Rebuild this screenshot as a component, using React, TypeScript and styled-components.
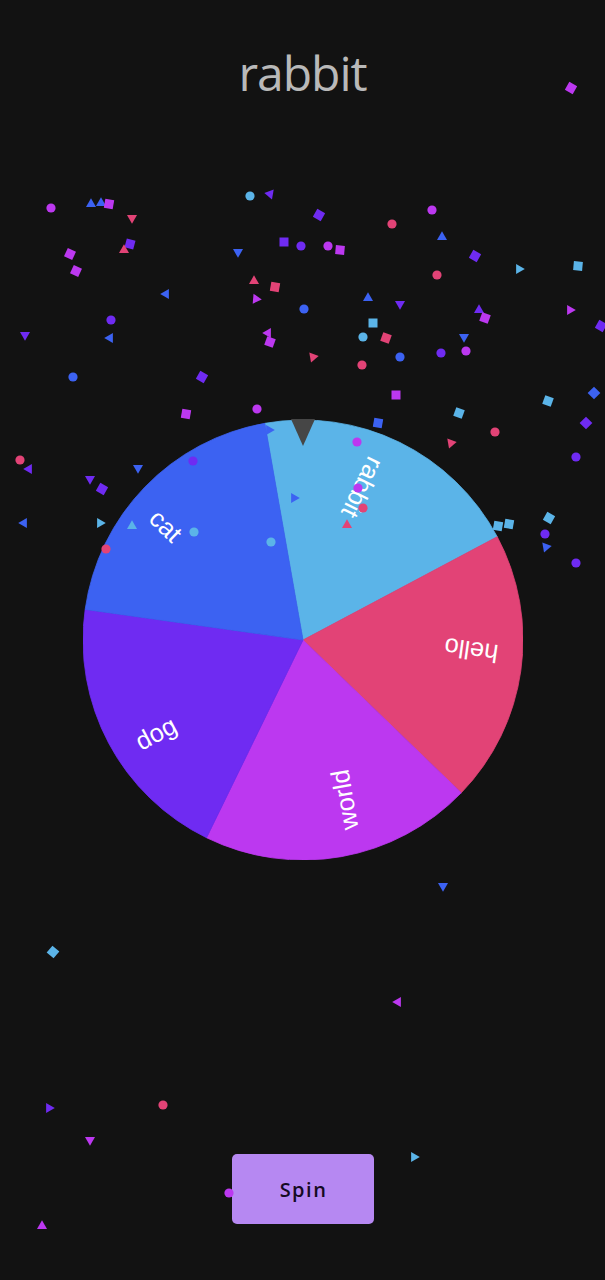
import React from "react";
import styled, { createGlobalStyle } from "styled-components";

const GlobalStyle = createGlobalStyle`
  html, body {
    margin: 0;
    padding: 0;
    background: #121212;
  }
  #root {
    min-height: 1280px;
  }
`;

const Page = styled.main`
  position: relative;
  width: 605px;
  min-height: 1280px;
  display: flex;
  flex-direction: column;
  align-items: center;
  padding-top: 49px;
  box-sizing: border-box;
  background: #121212;
  overflow: hidden;
`;

const Title = styled.h1`
  margin: 0;
  font-family: "Open Sans", "Noto Sans", sans-serif;
  font-weight: 400;
  font-size: 48px;
  line-height: 48px;
  letter-spacing: -1px;
  color: #b9b9b9;
`;

const WheelArea = styled.div`
  position: relative;
  width: 440px;
  height: 440px;
  margin-top: 323px;
`;

const WheelSvg = styled.svg`
  display: block;
  width: 440px;
  height: 440px;
`;

const Pointer = styled.div`
  position: absolute;
  top: -1px;
  left: 50%;
  transform: translateX(-50%);
  width: 0;
  height: 0;
  border-left: 12.5px solid transparent;
  border-right: 12.5px solid transparent;
  border-top: 27px solid #464646;
`;

const SpinButton = styled.button`
  margin-top: 294px;
  width: 142px;
  height: 70px;
  display: flex;
  align-items: center;
  justify-content: center;
  border: none;
  border-radius: 5px;
  background: #b688f2;
  color: #150a22;
  font-family: "Open Sans", "Noto Sans", sans-serif;
  font-size: 20px;
  font-weight: 600;
  letter-spacing: 1.5px;
  padding: 0 0 0 2px;
  cursor: pointer;
`;

const ConfettiLayer = styled.svg`
  position: absolute;
  top: 0;
  left: 0;
  width: 605px;
  height: 1280px;
  pointer-events: none;
`;

const COLORS: Record<string, string> = {
  L: "#5bb4e8",
  P: "#e24376",
  M: "#bc38f0",
  V: "#6f2bf2",
  B: "#3c62f2",
};

type Segment = { label: string; color: string };

const SEGMENTS: Segment[] = [
  { label: "rabbit", color: COLORS.L },
  { label: "hello", color: COLORS.P },
  { label: "world", color: COLORS.M },
  { label: "dog", color: COLORS.V },
  { label: "cat", color: COLORS.B },
];

const R = 220;
const OFFSET = -10;

const pt = (a: number, r: number) => {
  const rad = (a * Math.PI) / 180;
  return [r * Math.sin(rad), -r * Math.cos(rad)];
};

type Piece = [number, number, "c" | "s" | "t", string, number];

const PIECES: Piece[] = [
  [51, 208, "c", "M", 0],
  [91, 204, "t", "B", 0],
  [101, 203, "t", "B", 0],
  [109, 204, "s", "M", 10],
  [132, 218, "t", "P", 180],
  [250, 196, "c", "L", 0],
  [270, 194, "t", "V", 160],
  [319, 215, "s", "V", 30],
  [392, 224, "c", "P", 0],
  [432, 210, "c", "M", 0],
  [442, 237, "t", "B", 0],
  [475, 256, "s", "V", 30],
  [519, 269, "t", "L", 90],
  [578, 266, "s", "L", 5],
  [130, 244, "s", "V", 15],
  [124, 250, "t", "P", 0],
  [70, 254, "s", "M", 25],
  [76, 271, "s", "M", 25],
  [238, 252, "t", "B", 180],
  [284, 242, "s", "V", 0],
  [301, 246, "c", "V", 0],
  [328, 246, "c", "M", 0],
  [340, 250, "s", "M", 5],
  [254, 281, "t", "P", 0],
  [275, 287, "s", "P", 10],
  [256, 299, "t", "M", 95],
  [166, 294, "t", "B", 270],
  [437, 275, "c", "P", 0],
  [368, 298, "t", "B", 240],
  [400, 304, "t", "V", 180],
  [304, 309, "c", "B", 0],
  [111, 320, "c", "V", 0],
  [25, 335, "t", "V", 180],
  [110, 338, "t", "B", 270],
  [268, 333, "t", "M", 150],
  [270, 342, "s", "M", 20],
  [373, 323, "s", "L", 0],
  [363, 337, "c", "L", 0],
  [386, 338, "s", "P", 20],
  [464, 337, "t", "B", 300],
  [479, 310, "t", "V", 240],
  [485, 318, "s", "M", 20],
  [570, 310, "t", "M", 90],
  [601, 326, "s", "V", 30],
  [400, 357, "c", "B", 0],
  [441, 353, "c", "V", 0],
  [466, 351, "c", "M", 0],
  [313, 357, "t", "P", 80],
  [362, 365, "c", "P", 0],
  [73, 377, "c", "B", 0],
  [202, 377, "s", "V", 30],
  [396, 395, "s", "M", 0],
  [548, 401, "s", "L", 20],
  [594, 393, "s", "B", 45],
  [186, 414, "s", "M", 10],
  [257, 409, "c", "M", 0],
  [459, 413, "s", "L", 20],
  [586, 423, "s", "V", 45],
  [378, 423, "s", "B", 10],
  [495, 432, "c", "P", 0],
  [451, 443, "t", "P", 80],
  [357, 442, "c", "M", 0],
  [269, 430, "t", "B", 90],
  [193, 461, "c", "V", 0],
  [138, 468, "t", "B", 180],
  [29, 469, "t", "V", 150],
  [20, 460, "c", "P", 0],
  [90, 479, "t", "V", 300],
  [102, 489, "s", "V", 30],
  [100, 523, "t", "L", 210],
  [24, 523, "t", "B", 150],
  [132, 526, "t", "L", 0],
  [106, 549, "c", "P", 0],
  [194, 532, "c", "L", 0],
  [271, 542, "c", "L", 0],
  [294, 498, "t", "B", 90],
  [358, 488, "c", "M", 0],
  [363, 508, "c", "P", 0],
  [347, 525, "t", "P", 0],
  [498, 526, "s", "L", 10],
  [509, 524, "s", "L", 10],
  [549, 518, "s", "L", 30],
  [545, 534, "c", "V", 0],
  [546, 547, "t", "B", 200],
  [576, 457, "c", "V", 0],
  [576, 563, "c", "V", 0],
  [443, 886, "t", "B", 300],
  [53, 952, "s", "L", 40],
  [398, 1002, "t", "M", 270],
  [49, 1108, "t", "V", 90],
  [163, 1105, "c", "P", 0],
  [90, 1140, "t", "M", 180],
  [229, 1193, "c", "M", 0],
  [42, 1226, "t", "M", 0],
  [414, 1157, "t", "L", 90],
  [571, 88, "s", "M", 30],
];

const ConfettiPiece: React.FC<{ piece: Piece }> = ({ piece }) => {
  const [x, y, shape, c, rot] = piece;
  const fill = COLORS[c];
  const transform = `translate(${x} ${y}) rotate(${rot})`;
  if (shape === "c") return <circle cx={x} cy={y} r={4.6} fill={fill} />;
  if (shape === "s")
    return <rect x={-4.5} y={-4.5} width={9} height={9} fill={fill} transform={transform} />;
  return <polygon points="0,-5.8 5,2.9 -5,2.9" fill={fill} transform={transform} />;
};

const Wheel: React.FC = () => (
  <WheelSvg viewBox={`${-R} ${-R} ${2 * R} ${2 * R}`}>
    {SEGMENTS.map((seg, i) => {
      const s = OFFSET + 72 * i;
      const e = s + 72;
      const [x1, y1] = pt(s, R);
      const [x2, y2] = pt(e, R);
      return (
        <path
          key={seg.label}
          d={`M0 0 L${x1} ${y1} A${R} ${R} 0 0 1 ${x2} ${y2} Z`}
          fill={seg.color}
          stroke={seg.color}
          strokeWidth={0.8}
          strokeLinejoin="round"
        />
      );
    })}
    {SEGMENTS.map((seg, i) => {
      const mid = OFFSET + 72 * i + 36;
      return (
        <text
          key={seg.label + "-t"}
          transform={`rotate(${mid + 90})`}
          x={-195}
          y={22}
          fill="#ffffff"
          fontSize={25.5}
          fontFamily='"Liberation Sans", Arial, sans-serif'
        >
          {seg.label}
        </text>
      );
    })}
  </WheelSvg>
);

export default function App() {
  return (
    <>
      <GlobalStyle />
      <Page>
        <Title>rabbit</Title>
        <WheelArea>
          <Wheel />
          <Pointer />
        </WheelArea>
        <SpinButton>Spin</SpinButton>
        <ConfettiLayer viewBox="0 0 605 1280">
          {PIECES.map((p, i) => (
            <ConfettiPiece key={i} piece={p} />
          ))}
        </ConfettiLayer>
      </Page>
    </>
  );
}
